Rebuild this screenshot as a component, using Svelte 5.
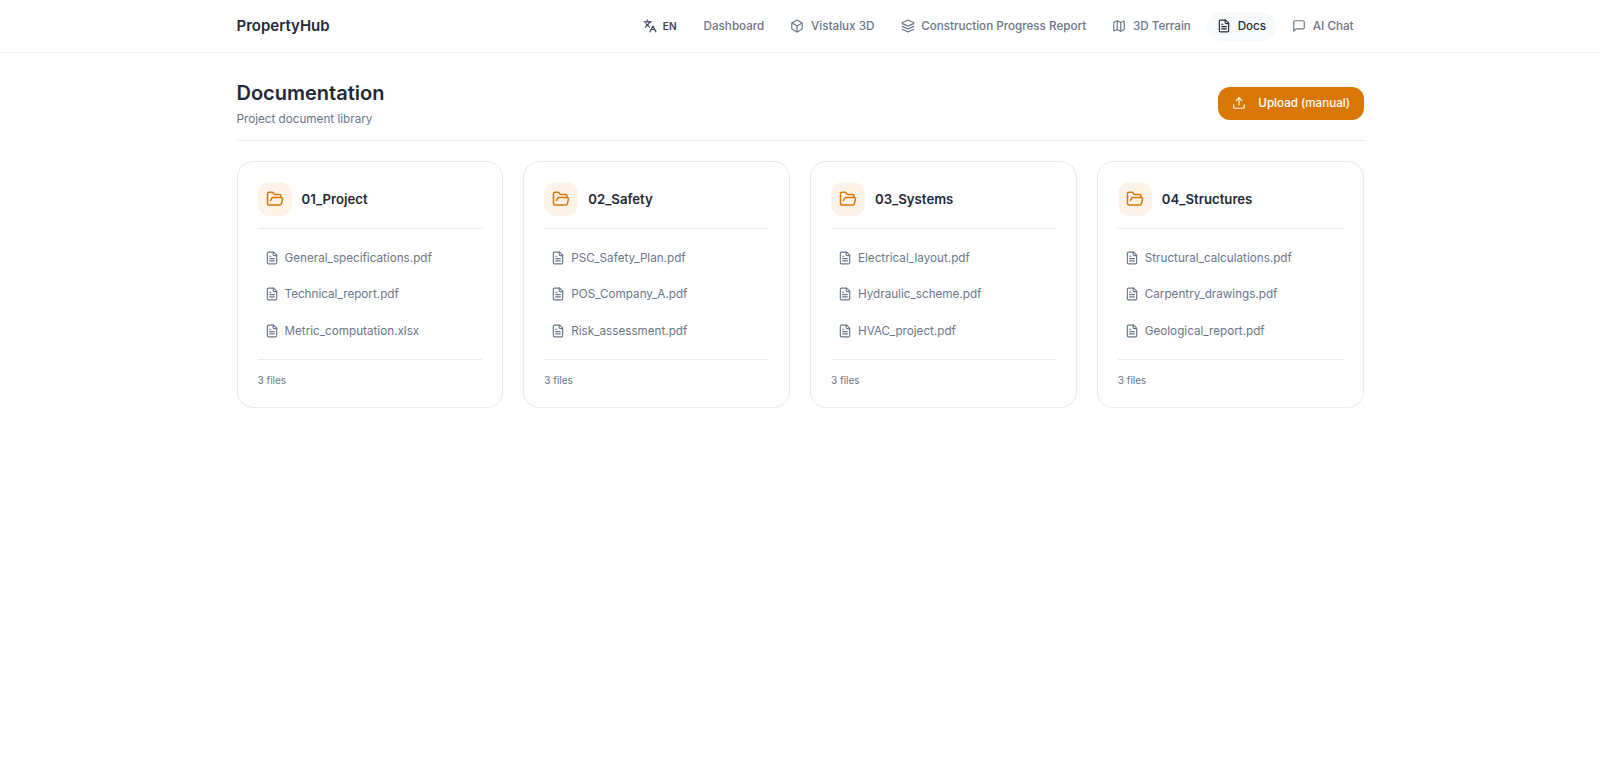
<script>
  const nav = [
    { label: 'Dashboard' },
    { label: 'Vistalux 3D', icon: 'box' },
    { label: 'Construction Progress Report', icon: 'layers' },
    { label: '3D Terrain', icon: 'map' },
    { label: 'Docs', icon: 'file', active: true },
    { label: 'AI Chat', icon: 'chat' }
  ]

  const folders = [
    { name: '01_Project', files: ['General_specifications.pdf', 'Technical_report.pdf', 'Metric_computation.xlsx'] },
    { name: '02_Safety', files: ['PSC_Safety_Plan.pdf', 'POS_Company_A.pdf', 'Risk_assessment.pdf'] },
    { name: '03_Systems', files: ['Electrical_layout.pdf', 'Hydraulic_scheme.pdf', 'HVAC_project.pdf'] },
    { name: '04_Structures', files: ['Structural_calculations.pdf', 'Carpentry_drawings.pdf', 'Geological_report.pdf'] }
  ]
</script>

{#snippet fileIcon()}
  <path d="M15 2H6a2 2 0 0 0-2 2v16a2 2 0 0 0 2 2h12a2 2 0 0 0 2-2V7Z" />
  <path d="M14 2v4a2 2 0 0 0 2 2h4" />
  <path d="M10 9H8" />
  <path d="M16 13H8" />
  <path d="M16 17H8" />
{/snippet}

{#snippet navIcon(name)}
  <svg class="icon" viewBox="0 0 24 24">
    {#if name === 'box'}
      <path d="M21 8a2 2 0 0 0-1-1.73l-7-4a2 2 0 0 0-2 0l-7 4A2 2 0 0 0 3 8v8a2 2 0 0 0 1 1.73l7 4a2 2 0 0 0 2 0l7-4A2 2 0 0 0 21 16Z" />
      <path d="m3.3 7 8.7 5 8.7-5" />
      <path d="M12 22V12" />
    {:else if name === 'layers'}
      <path d="M12.83 2.18a2 2 0 0 0-1.66 0L2.6 6.08a1 1 0 0 0 0 1.83l8.58 3.91a2 2 0 0 0 1.66 0l8.58-3.9a1 1 0 0 0 0-1.83Z" />
      <path d="m22 17.65-9.17 4.16a2 2 0 0 1-1.66 0L2 17.65" />
      <path d="m22 12.65-9.17 4.16a2 2 0 0 1-1.66 0L2 12.65" />
    {:else if name === 'map'}
      <path d="M14.106 5.553a2 2 0 0 0 1.788 0l3.659-1.83A1 1 0 0 1 21 4.619v12.764a1 1 0 0 1-.553.894l-4.553 2.277a2 2 0 0 1-1.788 0l-4.212-2.106a2 2 0 0 0-1.788 0l-3.659 1.83A1 1 0 0 1 3 19.381V6.618a1 1 0 0 1 .553-.894l4.553-2.277a2 2 0 0 1 1.788 0z" />
      <path d="M15 5.764v15" />
      <path d="M9 3.236v15" />
    {:else if name === 'file'}
      {@render fileIcon()}
    {:else if name === 'chat'}
      <path d="M21 15a2 2 0 0 1-2 2H7l-4 4V5a2 2 0 0 1 2-2h14a2 2 0 0 1 2 2z" />
    {/if}
  </svg>
{/snippet}

<div class="app">
  <header class="topbar">
    <div class="wrap topbar-inner">
      <span class="brand">PropertyHub</span>
      <nav>
        <button class="lang">
          <svg class="icon" viewBox="0 0 24 24">
            <path d="m5 8 6 6" />
            <path d="m4 14 6-6 2-3" />
            <path d="M2 5h12" />
            <path d="M7 2h1" />
            <path d="m22 22-5-10-5 10" />
            <path d="M14 18h6" />
          </svg>
          EN
        </button>
        {#each nav as item}
          <a href="#top" class="link" class:active={item.active}>
            {#if item.icon}{@render navIcon(item.icon)}{/if}
            {item.label}
          </a>
        {/each}
      </nav>
    </div>
  </header>

  <main class="wrap">
    <div class="page-head">
      <div>
        <h1>Documentation</h1>
        <p>Project document library</p>
      </div>
      <button class="upload">
        <svg class="icon" viewBox="0 0 24 24">
          <path d="M21 15v4a2 2 0 0 1-2 2H5a2 2 0 0 1-2-2v-4" />
          <path d="m17 8-5-5-5 5" />
          <path d="M12 3v12" />
        </svg>
        Upload (manual)
      </button>
    </div>

    <div class="grid">
      {#each folders as folder}
        <section class="card">
          <div class="card-head">
            <span class="folder">
              <svg viewBox="0 0 24 24">
                <path d="m6 14 1.5-2.9A2 2 0 0 1 9.24 10H20a2 2 0 0 1 1.94 2.5l-1.54 6a2 2 0 0 1-1.95 1.5H4a2 2 0 0 1-2-2V5a2 2 0 0 1 2-2h3.9a2 2 0 0 1 1.69.9l.81 1.2a2 2 0 0 0 1.67.9H18a2 2 0 0 1 2 2v2" />
              </svg>
            </span>
            <h2>{folder.name}</h2>
          </div>
          <ul>
            {#each folder.files as file}
              <li>
                <svg class="icon" viewBox="0 0 24 24">{@render fileIcon()}</svg>
                {file}
              </li>
            {/each}
          </ul>
          <div class="count">{folder.files.length} files</div>
        </section>
      {/each}
    </div>
  </main>
</div>

<style>
  :global(body) { background: #fff; font-family: Inter, 'Noto Sans', sans-serif; color: #1f2937; }
  .wrap { width: 1127px; margin: 0 auto; }
  svg { fill: none; stroke: currentColor; stroke-width: 2; stroke-linecap: round; stroke-linejoin: round; flex-shrink: 0; }
  .icon { width: 14px; height: 14px; }

  .topbar { height: 53px; box-sizing: border-box; border-bottom: 1px solid #f0f1f3; }
  .topbar-inner { display: flex; align-items: center; justify-content: space-between; height: 100%; }
  .brand { margin-bottom: 1px; font-size: 15px; font-weight: 600; color: #1f2937; }
  nav { display: flex; align-items: center; gap: 6.1px; }
  .lang { display: flex; align-items: center; gap: 6px; padding: 6px 11px 6px 10px; border: none; background: none; font: inherit; font-size: 10px; font-weight: 600; color: #374151; }
  .link { display: flex; align-items: center; gap: 6.7px; height: 29px; box-sizing: border-box; padding: 0 10px; border-radius: 14px; font-size: 11.65px; font-weight: 500; color: #6b7688; text-decoration: none; }
  .link.active { background: #f8f9fb; color: #1f2937; }

  .page-head { display: flex; align-items: center; justify-content: space-between; padding: 28px 0 12.5px; border-bottom: 1px solid #e8eaee; margin-bottom: 20px; }
  h1 { margin: 0 0 4.5px; font-size: 20px; line-height: 24px; font-weight: 600; color: #1f2937; }
  .page-head p { margin: 0; font-size: 11.7px; line-height: 18px; color: #6b7688; }
  .upload { display: flex; align-items: center; gap: 12.5px; height: 33px; margin-bottom: 2px; padding: 0 13.5px; border: none; border-radius: 12px; background: #d97706; color: #fff; font: inherit; font-size: 11.6px; font-weight: 500; }

  .grid { display: grid; grid-template-columns: repeat(4, 1fr); gap: 20px; }
  .card { border: 1px solid #e8eaee; border-radius: 16px; padding: 20px; }
  .card-head { display: flex; align-items: center; gap: 10px; padding-bottom: 12px; border-bottom: 1px solid #e8eaee; }
  .folder { display: flex; align-items: center; justify-content: center; width: 34px; height: 34px; border-radius: 12px; background: #fdf3e9; color: #d97706; }
  .folder svg { width: 18px; height: 18px; }
  h2 { margin: 0; font-size: 13.2px; font-weight: 600; color: #1f2937; }
  ul { list-style: none; margin: 0; padding: 10.6px 0 9.6px; border-bottom: 1px solid #e8eaee; }
  li { display: flex; align-items: center; gap: 6px; height: 36.6px; padding: 0 7px; font-size: 11.7px; color: #6b7688; }
  .count { padding-top: 13px; font-size: 10px; line-height: 14px; color: #6b7688; }
</style>
